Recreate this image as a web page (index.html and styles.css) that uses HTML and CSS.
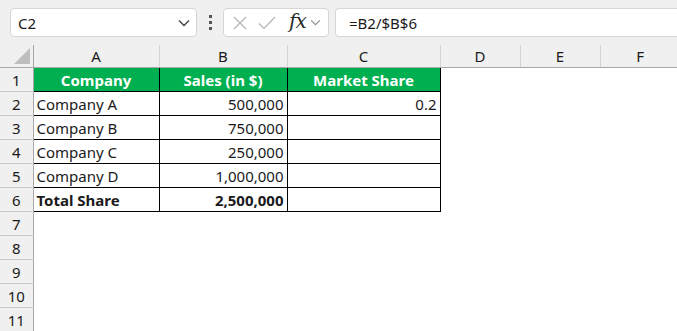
FILE: index.html
```html
<!DOCTYPE html>
<html>
<head>
  <title>Market Share</title>
  <link rel="stylesheet" href="styles.css">
</head>
<body>
  <div class="toolbar">
    <div class="name-box">
      <span>C2</span>
      <svg class="chevron" viewBox="0 0 12 8" fill="none" stroke="currentColor">
        <path d="M1 1.5l5 5 5-5" stroke-width="1.4"/>
      </svg>
    </div>
    <div class="grip">
      <span></span><span></span><span></span>
    </div>
    <div class="fx-box">
      <svg class="fx-icon" viewBox="0 0 14 14" fill="none" stroke="currentColor">
        <path d="M1 1l12 12M13 1L1 13" stroke-width="1.2"/>
      </svg>
      <svg class="fx-icon check" viewBox="0 0 18 14" fill="none" stroke="currentColor">
        <path d="M1 7.5l5 5L17 1" stroke-width="1.2"/>
      </svg>
      <span class="fx">fx</span>
      <svg class="chevron small" viewBox="0 0 12 8" fill="none" stroke="currentColor">
        <path d="M1 1.5l5 5 5-5" stroke-width="1.2"/>
      </svg>
    </div>
    <div class="formula">=B2/$B$6</div>
  </div>

  <table class="sheet">
    <colgroup>
      <col class="w-row">
      <col class="w-a">
      <col class="w-b">
      <col class="w-c">
      <col class="w-d">
      <col class="w-d">
      <col class="w-d">
    </colgroup>
    <thead>
      <tr>
        <th class="corner"><span class="tri"></span></th>
        <th>A</th><th>B</th><th>C</th><th>D</th><th>E</th><th class="last">F</th>
      </tr>
    </thead>
    <tbody>
      <tr>
        <td class="num">1</td>
        <td class="head">Company</td>
        <td class="head">Sales (in $)</td>
        <td class="head">Market Share</td>
        <td class="empty"></td><td class="empty"></td><td class="empty"></td>
      </tr>
      <tr>
        <td class="num">2</td>
        <td class="cell">Company A</td>
        <td class="cell right">500,000</td>
        <td class="cell right">0.2</td>
        <td class="empty"></td><td class="empty"></td><td class="empty"></td>
      </tr>
      <tr>
        <td class="num">3</td>
        <td class="cell">Company B</td>
        <td class="cell right">750,000</td>
        <td class="cell"></td>
        <td class="empty"></td><td class="empty"></td><td class="empty"></td>
      </tr>
      <tr>
        <td class="num">4</td>
        <td class="cell">Company C</td>
        <td class="cell right">250,000</td>
        <td class="cell"></td>
        <td class="empty"></td><td class="empty"></td><td class="empty"></td>
      </tr>
      <tr>
        <td class="num">5</td>
        <td class="cell">Company D</td>
        <td class="cell right">1,000,000</td>
        <td class="cell"></td>
        <td class="empty"></td><td class="empty"></td><td class="empty"></td>
      </tr>
      <tr>
        <td class="num">6</td>
        <td class="cell bold">Total Share</td>
        <td class="cell right bold">2,500,000</td>
        <td class="cell"></td>
        <td class="empty"></td><td class="empty"></td><td class="empty"></td>
      </tr>
      <tr><td class="num">7</td><td class="empty" colspan="6"></td></tr>
      <tr><td class="num">8</td><td class="empty" colspan="6"></td></tr>
      <tr><td class="num">9</td><td class="empty" colspan="6"></td></tr>
      <tr><td class="num">10</td><td class="empty" colspan="6"></td></tr>
      <tr><td class="num">11</td><td class="empty" colspan="6"></td></tr>
    </tbody>
  </table>
</body>
</html>
```

FILE: styles.css
```css
:root {
  --toolbar-bg: #f0f0f0;
  --header-bg: #f0f0f0;
  --box-border: #d6d6d6;
  --header-line: #d4d4d4;
  --green: #00b050;
  --text: #1a1a1a;
  --sheet-font: "Noto Sans", "Open Sans", sans-serif;
}

body {
  margin: 0;
  width: 677px;
  height: 331px;
  overflow: hidden;
  background: #ffffff;
  color: var(--text);
  font-family: var(--sheet-font);
}

/* formula bar */
.toolbar {
  display: flex;
  align-items: center;
  height: 45px;
  padding-left: 10px;
  background: var(--toolbar-bg);
  box-sizing: border-box;
}

.name-box,
.fx-box,
.formula {
  height: 29px;
  box-sizing: border-box;
  background: #ffffff;
  border: 1px solid var(--box-border);
  border-radius: 4px;
  display: flex;
  align-items: center;
}

.name-box {
  width: 187px;
  padding: 0 6px 0 7px;
  justify-content: space-between;
  font-size: 15px;
}

.chevron {
  width: 12px;
  height: 8px;
  color: #444444;
}

.chevron.small {
  width: 11px;
  height: 7px;
  color: #8a8a8a;
}

.grip {
  width: 26px;
  display: flex;
  flex-direction: column;
  align-items: center;
  gap: 3px;
}

.grip span {
  width: 3px;
  height: 3px;
  background: #555555;
}

.fx-box {
  width: 106px;
  padding: 0 4px 0 9px;
  gap: 0;
}

.fx-icon {
  width: 14px;
  height: 14px;
  color: #b4b4b4;
  margin-right: 11px;
}

.fx-icon.check {
  width: 18px;
  margin-right: 13px;
}

.fx {
  font-family: "DejaVu Serif", "Liberation Serif", serif;
  font-style: italic;
  font-size: 20px;
  color: #2a2a2a;
  margin-right: 4px;
  margin-top: -3px;
  letter-spacing: -1px;
}

.formula {
  flex: 1;
  margin-left: 6px;
  margin-right: -10px;
  padding-left: 13px;
  font-size: 15px;
  border-right: none;
  border-radius: 4px 0 0 4px;
}

/* sheet grid */
.sheet {
  border-collapse: collapse;
  table-layout: fixed;
  width: 680px;
  font-size: 15px;
}

.w-row { width: 33px; }
.w-a { width: 126px; }
.w-b { width: 128px; }
.w-c { width: 153px; }
.w-d { width: 80px; }

.sheet th {
  height: 22px;
  padding: 0;
  background: var(--header-bg);
  font-weight: normal;
  text-align: center;
  border-right: 1px solid var(--header-line);
  border-bottom: 1px solid #a8a8a8;
  line-height: 22px;
}

.sheet th.last {
  border-right: none;
}

.sheet th.corner {
  position: relative;
  border-right: 1px solid #a8a8a8;
}

.tri {
  position: absolute;
  right: 3px;
  bottom: 3px;
  width: 0;
  height: 0;
  border-left: 16px solid transparent;
  border-bottom: 16px solid #bdbdbd;
}

.sheet td {
  height: 23px;
  padding: 0 3px;
  white-space: nowrap;
  overflow: hidden;
}

.sheet td.num {
  padding: 0;
  text-align: center;
  background: var(--header-bg);
  border-right: 1px solid #a8a8a8;
  border-bottom: 1px solid #c6c6c6;
}

.sheet td.head {
  background: var(--green);
  color: #ffffff;
  font-weight: bold;
  text-align: center;
  border: 1px solid #000000;
}

.sheet td.cell {
  border: 1px solid #000000;
}

.sheet td.right {
  text-align: right;
}

.sheet td.bold {
  font-weight: bold;
}
```
